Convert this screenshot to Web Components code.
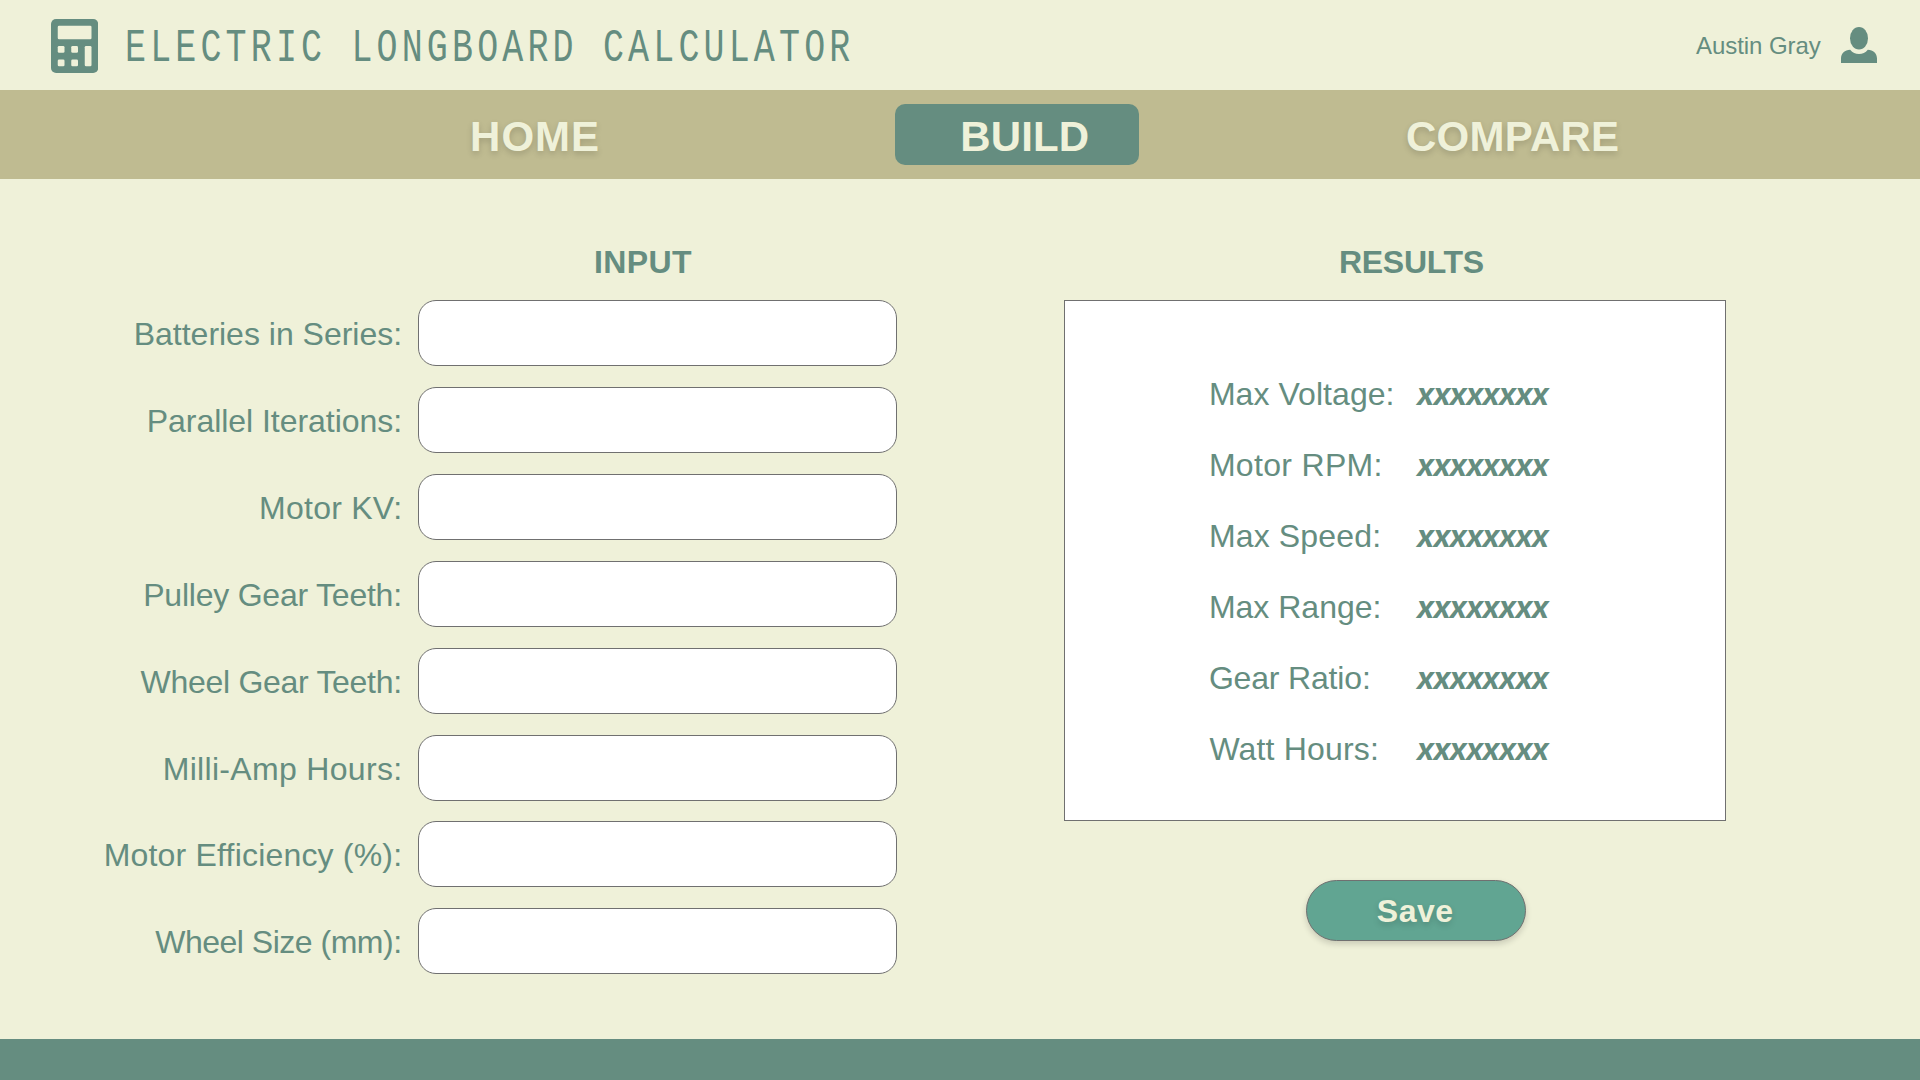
<!DOCTYPE html>
<html lang="en"><head><meta charset="utf-8"><title>Electric Longboard Calculator</title>
<style>
body{margin:0;background:#eff1d9;font-family:"Liberation Sans",Arial,sans-serif;color:#658d80}
</style></head><body>
<calc-app></calc-app>
<script>
const define=(name,html,init)=>{
  const t=document.createElement('template');t.innerHTML=html;
  customElements.define(name,class extends HTMLElement{
    connectedCallback(){
      if(this.shadowRoot)return;
      this.attachShadow({mode:'open'}).append(t.content.cloneNode(true));
      if(init)init.call(this,this.shadowRoot);
    }
  });
};
const ctx=document.createElement('canvas').getContext('2d');
// Text whose visible glyphs span exactly `w` pixels; tracking absorbs the difference.
// Side bearings are measured at ten times the size, for sub-pixel precision.
define('fit-text','<style>:host{display:block;white-space:pre;flex:none}span{display:inline-block}</style><span><slot></slot></span>',function(r){
  const s=getComputedStyle(this),str=this.textContent,w=+this.getAttribute('w'),sx=+(this.getAttribute('sx')||1);
  const span=r.querySelector('span');
  ctx.font=`${s.fontStyle} ${s.fontWeight} ${parseFloat(s.fontSize)*10}px ${s.fontFamily}`;
  const a=ctx.measureText(str[0]),z=ctx.measureText(str[str.length-1]);
  const lb=-a.actualBoundingBoxLeft/10,rb=(z.width-z.actualBoundingBoxRight)/10;
  span.style.letterSpacing='0.01px';
  const adv=span.getBoundingClientRect().width-.01*str.length;
  span.style.letterSpacing=(w/sx-(adv-lb-rb))/(str.length-1)+'px';
  span.style.marginLeft=-lb*sx+'px';
  if(sx!==1){span.style.transform=`scaleX(${sx})`;span.style.transformOrigin='0 0'}
  this.style.width=w+'px';
});
define('calc-icon',`<style>:host{display:block;width:47.25px;height:54px;flex:none}svg{display:block}</style>
<svg width="47.25" height="54" viewBox="0 0 448 512"><rect width="448" height="512" rx="48" fill="#658d80"/><g fill="#eff1d9"><rect x="64" y="64" width="320" height="128" rx="13"/><rect x="64" y="256" width="64" height="64" rx="13"/><rect x="192" y="256" width="64" height="64" rx="13"/><rect x="64" y="384" width="64" height="64" rx="13"/><rect x="192" y="384" width="64" height="64" rx="13"/><rect x="320" y="256" width="64" height="192" rx="13"/></g></svg>`);
define('user-icon',`<style>:host{display:block;width:36px;height:36px;flex:none}svg{display:block}</style>
<svg width="36" height="36" viewBox="0 0 36 36" fill="#658d80"><ellipse cx="18" cy="11.3" rx="9" ry="11.3"/><path d="M0 36V31.5C0 26.5 3.8 22.8 9.2 22.8C11.5 25.7 14.5 27 18 27S24.5 25.7 26.8 22.8C32.2 22.8 36 26.5 36 31.5V36Z"/></svg>`);
define('app-header',`<style>:host{display:flex;height:90px;box-sizing:border-box;padding-left:51px;align-items:flex-start}
calc-icon{margin-top:19px}.t{font:46px/52px "Liberation Mono",monospace;margin:23px 0 0 29.2px}
.u{font-size:24px;line-height:28px;margin:32px 20.3px 0 auto}user-icon{margin:27px 43px 0 0}</style>
<calc-icon></calc-icon><fit-text class="t" w="721.8" sx="0.76">ELECTRIC LONGBOARD CALCULATOR</fit-text>
<fit-text class="u" w="124.7">Austin Gray</fit-text><user-icon></user-icon>`);
define('nav-item',`<style>:host{display:block;font:bold 42px/48px "Liberation Sans",sans-serif;color:#eff1d9;text-shadow:0 3px 6px rgba(0,0,0,.16)}
:host([active]){background:#658d80;border-radius:10px;text-shadow:none}</style><slot></slot>`);
define('app-nav',`<style>:host{display:flex;height:89px;background:#bfbb91;box-sizing:border-box;padding:14px 0 0 472.7px}
nav-item{box-sizing:border-box;height:61px;padding-top:9px}
.b{width:244px;padding-left:68px;margin:0 268.3px 0 297px}</style>
<nav-item><fit-text w="125.3">HOME</fit-text></nav-item><nav-item class="b" active><fit-text w="124.7">BUILD</fit-text></nav-item><nav-item><fit-text w="210.7">COMPARE</fit-text></nav-item>`);
define('field-row',`<style>:host{display:flex;height:66px;justify-content:flex-end;gap:18.8px}
.l{font-size:32px;line-height:36px;padding-top:16px}
input{box-sizing:border-box;width:479px;height:66px;border:1px solid #707070;border-radius:18px;background:#fff;margin:0;padding:0 16px;font:32px "Liberation Sans";flex:none}</style>
<div class="l"><slot></slot></div><input>`);
define('input-panel',`<style>:host{display:block;width:897px;padding-top:65px}
h2{margin:0 0 0 596px;font-size:32px;line-height:36px;height:56px}
.g{display:flex;flex-direction:column;gap:21px}.s{margin-top:-1px}</style>
<h2><fit-text w="95.5">INPUT</fit-text></h2><div class="g">
<field-row><fit-text w="263">Batteries in Series:</fit-text></field-row>
<field-row><fit-text w="250">Parallel Iterations:</fit-text></field-row>
<field-row><fit-text w="137.6">Motor KV:</fit-text></field-row>
<field-row><fit-text w="253.5">Pulley Gear Teeth:</fit-text></field-row>
<field-row><fit-text w="258.6">Wheel Gear Teeth:</fit-text></field-row>
<field-row><fit-text w="234">Milli-Amp Hours:</fit-text></field-row>
<field-row class="s"><fit-text w="293">Motor Efficiency (%):</fit-text></field-row>
<field-row><fit-text w="244">Wheel Size (mm):</fit-text></field-row></div>`);
define('result-row',`<style>:host{display:flex;font-size:32px;line-height:36px;height:71px}
.l{width:204.6px;padding-left:.4px;box-sizing:border-box}.v{font:italic bold 31px/36px Inter,"Open Sans",sans-serif}</style>
<div class="l"><slot></slot></div><fit-text class="v" w="134.6">xxxxxxxx</fit-text>`);
define('save-button',`<style>:host{display:block}
button{display:flex;align-items:flex-start;box-sizing:border-box;width:220px;height:61px;border:1px solid #707070;border-radius:31px;background:#61a592;box-shadow:0 3px 6px rgba(0,0,0,.16);padding:12px 0 0 70.3px;margin:0;text-align:left;font:bold 32px/36px "Liberation Sans";color:#eff1d9;text-shadow:0 3px 6px rgba(0,0,0,.16)}</style>
<button><fit-text w="75">Save</fit-text></button>`);
define('results-panel',`<style>:host{display:block;padding-top:65px;width:662px}
h2{margin:0 0 0 277px;font-size:32px;line-height:36px;height:56px}
.box{box-sizing:border-box;height:521px;border:1px solid #707070;background:#fff;padding:75px 0 0 146px}
.o{margin-left:-1px}.p{margin-left:-2px}
save-button{margin:59px 0 0 242px}</style>
<h2><fit-text w="142.3">RESULTS</fit-text></h2>
<div class="box">
<result-row><fit-text w="180.2">Max Voltage:</fit-text></result-row>
<result-row><fit-text w="168.2">Motor RPM:</fit-text></result-row>
<result-row><fit-text w="166.8">Max Speed:</fit-text></result-row>
<result-row><fit-text w="167.2">Max Range:</fit-text></result-row>
<result-row><fit-text class="o" w="157.5">Gear Ratio:</fit-text></result-row>
<result-row><fit-text class="p" w="166.5">Watt Hours:</fit-text></result-row></div>
<save-button></save-button>`);
define('calc-app',`<style>:host{display:flex;flex-direction:column;height:1080px;width:1920px;overflow:hidden}
main{flex:1;display:flex;gap:167px}footer{height:41px;background:#658d80}</style>
<app-header></app-header><app-nav></app-nav><main><input-panel></input-panel><results-panel></results-panel></main><footer></footer>`);
</script></body></html>
